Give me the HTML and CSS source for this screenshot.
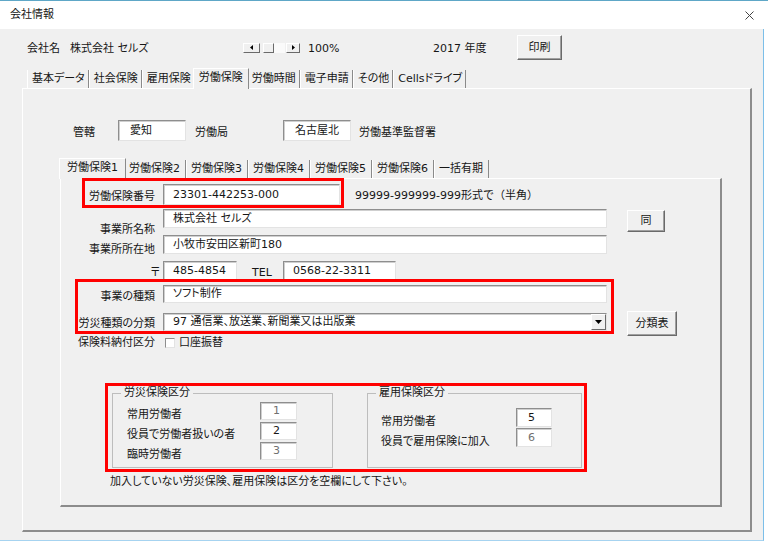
FILE: index.html
```html
<!DOCTYPE html>
<html lang="ja">
<head>
    <meta charset="UTF-8">
    <meta name="viewport" content="width=device-width, initial-scale=1.0">
    <title>会社情報</title>
    <link rel="stylesheet" href="styles.css">
</head>
<body>
<div class="window">
    <div class="titlebar">
        <span class="title">会社情報</span>
        <svg class="close" width="9" height="9" viewBox="0 0 9 9">
            <path d="M0.5 0.5L8.5 8.5M8.5 0.5L0.5 8.5" stroke="#444" stroke-width="1" fill="none"/>
        </svg>
    </div>

    <div class="client">
        <div class="header">
            <span class="company-label">会社名</span>
            <span class="company">株式会社 セルズ</span>
            <div class="zoom-bar">
                <span class="arrow-btn arrow-left"><svg width="3" height="5" viewBox="0 0 3 5"><path d="M3 0V5L0 2.5Z" fill="#000"/></svg></span>
                <span class="thumb"></span>
                <span class="track"></span>
                <span class="arrow-btn arrow-right"><svg width="3" height="5" viewBox="0 0 3 5"><path d="M0 0V5L3 2.5Z" fill="#000"/></svg></span>
            </div>
            <span class="zoom-value">100%</span>
            <span class="year">2017 年度</span>
            <button class="btn print-btn">印刷</button>
        </div>

        <div class="tabs outer-tabs">
            <span class="tab">基本データ</span>
            <span class="tab">社会保険</span>
            <span class="tab">雇用保険</span>
            <span class="tab active">労働保険</span>
            <span class="tab">労働時間</span>
            <span class="tab">電子申請</span>
            <span class="tab">その他</span>
            <span class="tab">Cellsドライブ</span>
        </div>

        <div class="panel outer-panel">
            <div class="kankatsu-row">
                <span class="kankatsu-label">管轄</span>
                <div class="field field-office">愛知</div>
                <span class="bureau-label">労働局</span>
                <div class="field field-office">名古屋北</div>
                <span class="office-label">労働基準監督署</span>
            </div>

            <div class="tabs inner-tabs">
                <span class="tab active">労働保険1</span>
                <span class="tab">労働保険2</span>
                <span class="tab">労働保険3</span>
                <span class="tab">労働保険4</span>
                <span class="tab">労働保険5</span>
                <span class="tab">労働保険6</span>
                <span class="tab">一括有期</span>
            </div>

            <div class="panel inner-panel">
                <div class="row row-number">
                    <div class="redbox number-box">
                        <span class="label number-label">労働保険番号</span>
                        <div class="field field-number">23301-442253-000</div>
                    </div>
                    <span class="hint">99999-999999-999形式で（半角）</span>
                </div>

                <div class="row row-name">
                    <span class="label">事業所名称</span>
                    <div class="field field-long">株式会社 セルズ</div>
                    <button class="btn same-btn">同</button>
                </div>

                <div class="row row-address">
                    <span class="label">事業所所在地</span>
                    <div class="field field-long">小牧市安田区新町180</div>
                </div>

                <div class="row row-tel">
                    <span class="label zip-label">〒</span>
                    <div class="field field-zip">485-4854</div>
                    <span class="tel-label">TEL</span>
                    <div class="field field-tel">0568-22-3311</div>
                </div>

                <div class="row row-business">
                    <div class="redbox business-box">
                        <div class="sub-row">
                            <span class="label business-label">事業の種類</span>
                            <div class="field field-long field-short-h">ソフト制作</div>
                        </div>
                        <div class="sub-row sub-row-second">
                            <span class="label business-label">労災種類の分類</span>
                            <div class="field field-long field-short-h combo">
                                <span>97 通信業、放送業、新聞業又は出版業</span>
                                <span class="combo-btn"><svg width="7" height="4" viewBox="0 0 7 4"><path d="M0 0H7L3.5 4Z" fill="#000"/></svg></span>
                            </div>
                        </div>
                    </div>
                    <button class="btn class-btn">分類表</button>
                </div>

                <div class="row row-payment">
                    <span class="label">保険料納付区分</span>
                    <span class="checkbox"></span>
                    <span class="check-text">口座振替</span>
                </div>

                <div class="row row-frames">
                    <div class="redbox frames-box">
                        <fieldset class="frame frame-rousai">
                            <legend>労災保険区分</legend>
                            <div class="frame-body">
                                <div class="frame-row">
                                    <span class="frame-label">常用労働者</span>
                                    <div class="field field-num dim">1</div>
                                </div>
                                <div class="frame-row">
                                    <span class="frame-label">役員で労働者扱いの者</span>
                                    <div class="field field-num">2</div>
                                </div>
                                <div class="frame-row">
                                    <span class="frame-label">臨時労働者</span>
                                    <div class="field field-num dim">3</div>
                                </div>
                            </div>
                        </fieldset>
                        <fieldset class="frame frame-koyou">
                            <legend>雇用保険区分</legend>
                            <div class="frame-body">
                                <div class="frame-row">
                                    <span class="frame-label">常用労働者</span>
                                    <div class="field field-num">5</div>
                                </div>
                                <div class="frame-row">
                                    <span class="frame-label">役員で雇用保険に加入</span>
                                    <div class="field field-num dim">6</div>
                                </div>
                            </div>
                        </fieldset>
                    </div>
                </div>

                <div class="note">加入していない労災保険、雇用保険は区分を空欄にして下さい。</div>
            </div>
        </div>
    </div>
</div>
</body>
</html>
```

FILE: styles.css
```css
* {
    box-sizing: border-box;
}

body {
    margin: 0;
    background: #fff;
    font-family: "DejaVu Sans", "Noto Sans CJK JP", sans-serif;
    font-size: 11px;
    line-height: 14px;
    color: #161616;
    font-feature-settings: "palt";
}

.window {
    width: 768px;
    height: 544px;
    border-top: 1px solid #5ea7c7;
}

.titlebar {
    height: 28px;
    display: flex;
    align-items: center;
    justify-content: space-between;
    padding: 0 14px 0 10px;
}

.client {
    width: 764px;
    height: 512px;
    background: #f0f0f0;
    border-right: 1px solid #7cbfe9;
    border-bottom: 1px solid #a6d3f0;
    padding: 6px 0 0 22px;
}

/* header row */
.header {
    display: flex;
    align-items: center;
    height: 25px;
}

.company-label {
    margin-left: 5px;
    width: 43px;
    padding-top: 3px;
}

.company {
    width: 173px;
    padding-top: 3px;
}

.zoom-bar {
    display: flex;
    align-items: center;
    width: 57px;
    height: 10px;
}

.arrow-btn {
    display: flex;
    align-items: center;
    justify-content: center;
    height: 10px;
    background: #f0f0f0;
    border: 1px solid;
    border-color: #fff #6a6a6a #6a6a6a #fff;
}

.arrow-left {
    width: 17px;
}

.arrow-right {
    width: 14px;
    margin-left: 1px;
}

.thumb {
    width: 11px;
    height: 10px;
    margin-left: 3px;
    border: 1px solid;
    border-color: #fff #6a6a6a #6a6a6a #fff;
}

.track {
    width: 11px;
    height: 10px;
    background: #fafafa;
}

.zoom-value {
    margin-left: 8px;
    width: 125px;
    padding-top: 3px;
}

.year {
    width: 84px;
    padding-top: 3px;
}

.btn {
    font: inherit;
    color: inherit;
    background: #f0f0f0;
    border: 1px solid;
    border-color: #fff #6a6a6a #6a6a6a #fff;
    box-shadow: inset -1px -1px 0 #a0a0a0;
    padding: 0;
}

.print-btn {
    width: 45px;
    height: 25px;
}

/* tabs */
.tabs {
    display: flex;
    align-items: flex-end;
    height: 18px;
}

.outer-tabs {
    margin: 10px 0 0 5px;
}

.tab {
    height: 18px;
    padding: 0 3px 0 4px;
    line-height: 18px;
    border-left: 1px solid #fff;
    border-right: 1px solid #8a8a8a;
    white-space: nowrap;
}

.tab.active {
    height: 21px;
    margin: 0 -2px -1px;
    padding: 0 5px 2px;
    background: #f0f0f0;
    border-top: 1px solid #fff;
    position: relative;
    z-index: 1;
}

.inner-tabs .tab {
    padding: 0 5px 0 4px;
}

.inner-tabs .tab.active {
    padding: 0 7px 2px;
}

.panel {
    border-top: 1px solid #fff;
    border-left: 1px solid #fff;
    border-right: 2px solid #8c8c8c;
    border-bottom: 2px solid #8c8c8c;
}

.outer-panel {
    width: 730px;
    height: 444px;
    padding: 31px 0 0 37px;
}

.kankatsu-row {
    display: flex;
    align-items: flex-start;
    height: 21px;
    margin-left: 13px;
}

.kankatsu-row span {
    padding-top: 6px;
}

.kankatsu-label {
    width: 45px;
}

.bureau-label {
    width: 88px;
    margin-left: 9px;
}

.office-label {
    margin-left: 8px;
}

.inner-tabs {
    margin: 19px 0 0 1px;
}

.inner-panel {
    width: 662px;
    height: 329px;
}

/* fields */
.field {
    display: flex;
    align-items: center;
    background: #fff;
    border-top: 1px solid #8e8e8e;
    border-left: 1px solid #8e8e8e;
    border-right: 1px solid #e3e3e3;
    border-bottom: 1px solid #e3e3e3;
    box-shadow: inset 1px 1px 0 #cfcfcf;
    padding-left: 9px;
    white-space: nowrap;
}

.field-office {
    width: 68px;
    height: 21px;
    padding-left: 11px;
}

.field-number {
    width: 177px;
    height: 21px;
    margin-left: 8px;
}

.field-long {
    width: 444px;
    height: 19px;
    margin-left: 8px;
}

.field-short-h {
    height: 18px;
}

.field-zip {
    width: 74px;
    height: 20px;
    margin-left: 3px;
}

.field-tel {
    width: 113px;
    height: 20px;
}

.field-num {
    width: 37px;
    height: 18px;
    padding-left: 12px;
}

.dim {
    color: #707070;
}

.combo {
    justify-content: space-between;
}

.combo-btn {
    display: flex;
    align-items: center;
    justify-content: center;
    width: 15px;
    height: 16px;
    background: #f0f0f0;
    border: 1px solid;
    border-color: #fff #6a6a6a #6a6a6a #fff;
}

/* rows */
.row {
    display: flex;
    align-items: flex-start;
}

.label {
    width: 94px;
    text-align: right;
    white-space: nowrap;
}

.redbox {
    border: 3px solid #f00;
    position: relative;
    z-index: 2;
}

.row-number {
    height: 30px;
    margin-top: -1px;
}

.number-box {
    display: flex;
    margin-left: 21px;
    padding: 3px 1px 0 0;
}

.number-label {
    width: 70px;
    padding-top: 6px;
}

.hint {
    margin-left: 11px;
    padding-top: 11px;
    font-feature-settings: normal;
}

.row-name {
    height: 26px;
    margin-top: 1px;
}

.row-name .label {
    padding-top: 14px;
}

.same-btn {
    width: 38px;
    height: 22px;
    margin: 1px 0 0 20px;
}

.row-address {
    height: 26px;
}

.row-address .label {
    padding-top: 8px;
}

.row-tel {
    height: 18px;
}

.zip-label {
    width: 99px;
    padding-top: 5px;
}

.tel-label {
    width: 31px;
    margin-left: 15px;
    padding-top: 5px;
}

.row-business {
    height: 54px;
}

.business-box {
    margin-left: 14px;
    padding: 3px 4px 0 0;
}

.sub-row {
    display: flex;
}

.sub-row-second {
    margin-top: 9px;
}

.business-label {
    width: 77px;
    padding-top: 5px;
}

.sub-row-second .business-label {
    padding-top: 4px;
}

.class-btn {
    width: 50px;
    height: 25px;
    margin: 32px 0 0 13px;
}

.row-payment {
    height: 12px;
    margin-top: 4px;
    line-height: 12px;
}

.checkbox {
    width: 10px;
    height: 10px;
    margin: 1px 0 0 10px;
    background: #fff;
    border-top: 1px solid #8e8e8e;
    border-left: 1px solid #8e8e8e;
    border-right: 1px solid #e3e3e3;
    border-bottom: 1px solid #e3e3e3;
}

.check-text {
    margin-left: 4px;
}

.row-frames {
    margin-top: 34px;
}

.frames-box {
    display: flex;
    width: 482px;
    height: 89px;
    margin-left: 44px;
    padding: 0 2px 0 4px;
}

.frame {
    margin: 0;
    padding: 0;
    height: 82px;
    border: 1px solid #bdbdbd;
}

.frame legend {
    margin-left: 8px;
    padding: 0 3px;
    line-height: 14px;
}

.frame-rousai {
    width: 221px;
}

.frame-koyou {
    width: 215px;
    margin-left: 34px;
}

.frame-rousai .frame-body {
    padding: 2px 0 0 14px;
}

.frame-koyou .frame-body {
    padding: 8px 0 0 13px;
}

.frame-row {
    display: flex;
    height: 20px;
}

.frame-label {
    width: 133px;
    padding-top: 6px;
    white-space: nowrap;
}

.frame-koyou .frame-label {
    width: 135px;
    padding-top: 7px;
}

.frame-koyou .field-num {
    width: 36px;
    height: 19px;
    padding-left: 11px;
}

.note {
    margin: 3px 0 0 49px;
}
```
